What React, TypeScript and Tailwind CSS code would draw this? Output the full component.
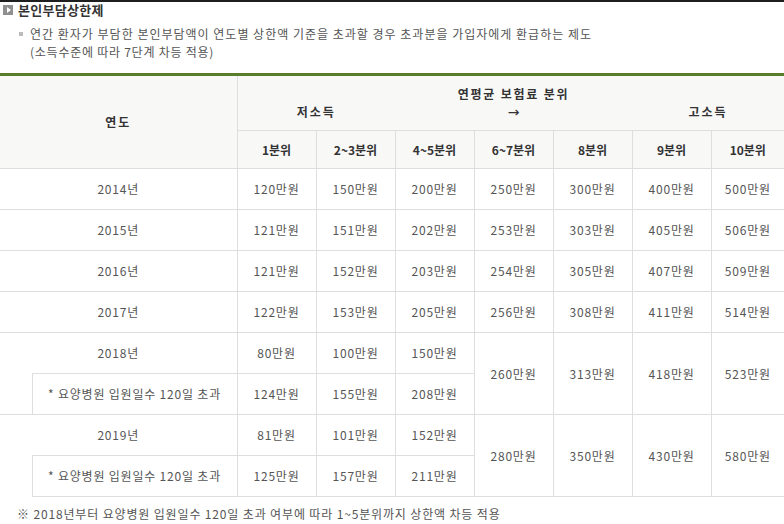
import React from "react";

const font = { fontFamily: '"Noto Sans CJK KR", "Noto Sans", sans-serif' };

type Row = { year: string; v: string[] };

const simpleRows: Row[] = [
  { year: "2014년", v: ["120만원", "150만원", "200만원", "250만원", "300만원", "400만원", "500만원"] },
  { year: "2015년", v: ["121만원", "151만원", "202만원", "253만원", "303만원", "405만원", "506만원"] },
  { year: "2016년", v: ["121만원", "152만원", "203만원", "254만원", "305만원", "407만원", "509만원"] },
  { year: "2017년", v: ["122만원", "153만원", "205만원", "256만원", "308만원", "411만원", "514만원"] },
];

const splitRows = [
  {
    year: "2018년",
    a: ["80만원", "100만원", "150만원"],
    b: ["124만원", "155만원", "208만원"],
    shared: ["260만원", "313만원", "418만원", "523만원"],
  },
  {
    year: "2019년",
    a: ["81만원", "101만원", "152만원"],
    b: ["125만원", "157만원", "211만원"],
    shared: ["280만원", "350만원", "430만원", "580만원"],
  },
];

const td = "border border-[#dedede] text-center align-middle text-[12px] tracking-[0.8px] text-[#555] h-[41px] p-0";
const th = "border border-[#dedede] text-center align-middle text-[12px] font-bold text-[#333] p-0";

export default function App() {
  return (
    <div className="w-[784px] h-[524px] overflow-hidden bg-white" style={font}>
      <div className="h-[2px] bg-[#1e1e1e]" />
      <div className="flex items-center h-[15px] pl-[3px] gap-[5px]">
        <div className="w-[10px] h-[10px] bg-[#8f8f8f] flex items-center justify-center">
          <div className="w-0 h-0 border-y-[3px] border-y-transparent border-l-[4px] border-l-white ml-[1px]" />
        </div>
        <div className="text-[13px] font-bold text-[#333] leading-[15px] tracking-[0.3px]">본인부담상한제</div>
      </div>
      <div className="pl-[19px] pt-[8px] text-[12px] text-[#555] leading-[18px]">
        <div className="flex items-center">
          <span className="w-[4px] h-[4px] bg-[#bbb] mr-[7px]" />
          <span className="tracking-[1px]">
            연간 환자가 부담한 본인부담액이 연도별 상한액 기준을 초과할 경우 초과분을 가입자에게 환급하는 제도
          </span>
        </div>
        <div className="pl-[11px] tracking-[0.75px]">(소득수준에 따라 7단계 차등 적용)</div>
      </div>
      <table className="mt-[12px] w-[784px] table-fixed border-collapse border-t-[3px] border-t-[#5a7d2c]">
        <colgroup>
          <col className="w-[32px]" />
          <col className="w-[205px]" />
          <col className="w-[79px]" />
          <col className="w-[79px]" />
          <col className="w-[79px]" />
          <col className="w-[79px]" />
          <col className="w-[79px]" />
          <col className="w-[79px]" />
          <col className="w-[73px]" />
        </colgroup>
        <thead className="bg-[#f8f8f7]">
          <tr className="h-[56px]">
            <th rowSpan={2} colSpan={2} className={`${th} border-l-0 border-t-0 tracking-[2px]`}>
              연도
            </th>
            <th colSpan={2} className={`${th} border-r-0 border-t-0 leading-[18px] tracking-[2px]`}>
              <br />
              저소득
            </th>
            <th colSpan={3} className={`${th} border-x-0 border-t-0 leading-[18px] tracking-[1.8px]`}>
              연평균 보험료 분위
              <br />
              <span
                className="font-normal tracking-normal text-[14px] leading-[18px]"
                style={{ fontFamily: '"DejaVu Sans", sans-serif' }}
              >
                →
              </span>
            </th>
            <th colSpan={2} className={`${th} border-l-0 border-r-0 border-t-0 leading-[18px] tracking-[2px]`}>
              <br />
              고소득
            </th>
          </tr>
          <tr className="h-[38px]">
            {["1분위", "2~3분위", "4~5분위", "6~7분위", "8분위", "9분위", "10분위"].map((h, i) => (
              <th key={h} className={`${th} ${i === 6 ? "border-r-0" : ""}`}>
                {h}
              </th>
            ))}
          </tr>
        </thead>
        <tbody>
          {simpleRows.map((r) => (
            <tr key={r.year}>
              <td colSpan={2} className={`${td} border-l-0`}>
                {r.year}
              </td>
              {r.v.map((v, i) => (
                <td key={i} className={`${td} ${i === 6 ? "border-r-0" : ""}`}>
                  {v}
                </td>
              ))}
            </tr>
          ))}
          {splitRows.map((r) => (
            <React.Fragment key={r.year}>
              <tr>
                <td colSpan={2} className={`${td} border-l-0 border-b-0`}>
                  {r.year}
                </td>
                {r.a.map((v, i) => (
                  <td key={i} className={td}>
                    {v}
                  </td>
                ))}
                {r.shared.map((v, i) => (
                  <td key={"s" + i} rowSpan={2} className={`${td} ${i === 3 ? "border-r-0" : ""}`}>
                    {v}
                  </td>
                ))}
              </tr>
              <tr>
                <td className="h-[41px] p-0 border-0" />
                <td className={td}>* 요양병원 입원일수 120일 초과</td>
                {r.b.map((v, i) => (
                  <td key={i} className={td}>
                    {v}
                  </td>
                ))}
              </tr>
            </React.Fragment>
          ))}
        </tbody>
      </table>
      <div className="pl-[17px] pt-[8px] text-[12px] text-[#555] leading-[18px] tracking-[0.85px]">
        ※ 2018년부터 요양병원 입원일수 120일 초과 여부에 따라 1~5분위까지 상한액 차등 적용
      </div>
    </div>
  );
}
